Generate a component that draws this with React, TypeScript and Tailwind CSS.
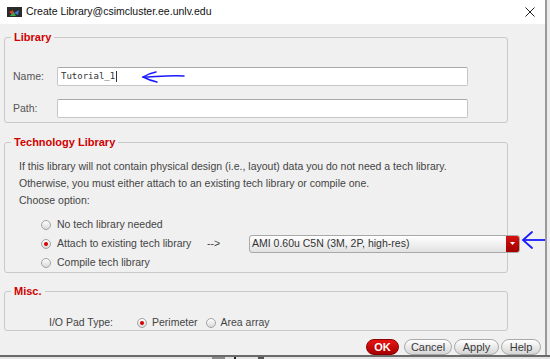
import React from 'react';

function Radio({ checked }: { checked?: boolean }) {
  return (
    <span className="flex h-[10px] w-[10px] shrink-0 items-center justify-center rounded-full border border-[#a3a3a3] bg-gradient-to-b from-[#fdfdfd] to-[#d9d9d9]">
      {checked && <span className="h-[4px] w-[4px] rounded-full bg-[#d40000]" />}
    </span>
  );
}

function Box({ title, className, children }: { title: string; className?: string; children: React.ReactNode }) {
  return (
    <div className={`relative w-[504px] rounded-[3px] border border-[#c9c9c9] ${className ?? ''}`}>
      <span className="absolute -top-[8px] left-[6px] bg-[#f0f0f0] px-[3px] text-[11px] font-bold leading-[14px] text-[#d00000]">
        {title}
      </span>
      {children}
    </div>
  );
}

function Btn({ label, w, primary }: { label: string; w: string; primary?: boolean }) {
  return (
    <button
      className={`flex h-[16px] items-center justify-center rounded-full border text-[11px] leading-none ${w} ${
        primary
          ? 'border-[#8a0000] bg-gradient-to-b from-[#e81414] to-[#a80000] font-bold text-white'
          : 'border-[#a9a9a9] bg-gradient-to-b from-[#ffffff] to-[#d6d6d6] text-[#3a3a3a]'
      }`}
    >
      {label}
    </button>
  );
}

export default function App() {
  return (
    <div className="relative flex h-[359px] w-[550px] flex-col overflow-hidden bg-[#e6e6e6] font-['Liberation_Sans',Arial,sans-serif] text-[10.5px] text-[#444]">
      <div className="flex h-[355px]">
        <div className="flex w-[545px] flex-col">
          {/* title bar */}
          <div className="flex h-[24px] items-center bg-white pl-[7px] pr-[10px]">
            <svg width="15" height="10" viewBox="0 0 15 10">
              <rect x="0" y="0" width="15" height="10" fill="#2b2b2b" />
              <path d="M3 9 L6 4 L9 9 Z" fill="#2bb24c" />
              <path d="M2 5 L6 3 L6 8 Z" fill="#e23b2e" />
              <path d="M7 6 L12 3 L11 8 Z" fill="#3b7be0" />
            </svg>
            <span className="ml-[4px] text-[10.5px] text-[#111]">Create Library@csimcluster.ee.unlv.edu</span>
            <svg className="ml-auto" width="10" height="10" viewBox="0 0 10 10">
              <path d="M0.5 0.5 L9.5 9.5 M9.5 0.5 L0.5 9.5" stroke="#222" strokeWidth="1" />
            </svg>
          </div>

          {/* body */}
          <div className="relative flex flex-1 flex-col bg-[#f0f0f0] px-[4px]">
            <Box title="Library" className="mt-[13px] pb-[4px] pl-[8px] pt-[29px]">
              <div className="flex items-center">
                <span className="w-[44px] shrink-0 text-[#555]">Name:</span>
                <div className="flex h-[19px] w-[411px] shrink-0 items-center rounded-[2px] border border-[#c6c6c6] border-t-[#a9a9a9] bg-white pl-[3px] font-['DejaVu_Sans_Mono',monospace] text-[9px] text-[#333]">
                  Tutorial_1<span className="ml-[1px] h-[11px] w-[1px] bg-[#333]" />
                </div>
              </div>
              <div className="mt-[13px] flex items-center">
                <span className="w-[44px] shrink-0 text-[#555]">Path:</span>
                <div className="h-[19px] w-[411px] shrink-0 rounded-[2px] border border-[#c6c6c6] border-t-[#a9a9a9] bg-white" />
              </div>
            </Box>

            <Box title="Technology Library" className="mt-[19px] pl-[14px] pt-[15px]">
              <div className="leading-[17px]">
                <p>If this library will not contain physical design (i.e., layout) data you do not need a tech library.</p>
                <p>Otherwise, you must either attach to an existing tech library or compile one.</p>
                <p>Choose option:</p>
              </div>
              <div className="ml-[22px] mt-[6px] flex flex-col">
                <div className="flex h-[19px] items-center gap-[6px]">
                  <Radio />
                  <span>No tech library needed</span>
                </div>
                <div className="flex h-[19px] items-center">
                  <div className="flex w-[166px] shrink-0 items-center gap-[6px]">
                    <Radio checked />
                    <span className="whitespace-nowrap">Attach to existing tech library</span>
                  </div>
                  <span className="w-[42px] shrink-0">--&gt;</span>
                  <div className="relative flex h-[18px] w-[271px] shrink-0 items-center overflow-hidden rounded-[3px] border border-[#a8a8a8] bg-gradient-to-b from-[#ffffff] to-[#e2e2e2]">
                    <span className="flex-1 pl-[2px] text-[#333]">AMI 0.60u C5N (3M, 2P, high-res)</span>
                    <span className="flex h-full w-[13px] items-center justify-center bg-gradient-to-b from-[#d81010] to-[#a00000]">
                      <svg width="5" height="3" viewBox="0 0 5 3">
                        <path d="M0 0 L5 0 L2.5 3 Z" fill="#fff" />
                      </svg>
                    </span>
                  </div>
                </div>
                <div className="flex h-[19px] items-center gap-[6px]">
                  <Radio />
                  <span>Compile tech library</span>
                </div>
              </div>
            </Box>

            <Box title="Misc." className="mt-[18px] h-[40px] pl-[44px] pt-[24px]">
              <div className="flex h-[14px] items-center">
                <span className="w-[88px] shrink-0">I/O Pad Type:</span>
                <Radio checked />
                <span className="ml-[5px] mr-[8px]">Perimeter</span>
                <Radio />
                <span className="ml-[5px]">Area array</span>
              </div>
            </Box>

            <div className="ml-[362px] mt-[8px] flex">
              <Btn label="OK" w="w-[37px]" primary />
              <div className="ml-[5px]"><Btn label="Cancel" w="w-[48px]" /></div>
              <div className="ml-[2px]"><Btn label="Apply" w="w-[45px]" /></div>
              <div className="ml-[2px]"><Btn label="Help" w="w-[40px]" /></div>
            </div>

            {/* hand-drawn annotations */}
            <svg className="absolute left-[139px] top-[44px]" width="50" height="16" viewBox="0 0 50 16">
              <path d="M4 9 C14 9 30 7 45 8" stroke="#1a1aff" strokeWidth="1.5" fill="none" strokeLinecap="round" />
              <path d="M17 4 C12 5 7 7 4 9 C8 11 13 13 18 14" stroke="#1a1aff" strokeWidth="1.5" fill="none" strokeLinecap="round" />
            </svg>
            <svg className="absolute left-[517px] top-[205px]" width="28" height="22" viewBox="0 0 28 22">
              <path d="M6 11 L28 11" stroke="#1a1aff" strokeWidth="1.8" fill="none" />
              <path d="M15 3 L6 11 L15 19" stroke="#1a1aff" strokeWidth="1.8" fill="none" strokeLinecap="round" />
            </svg>
          </div>
        </div>
        <div className="w-[5px] border-l-2 border-[#9a9a9a] bg-[#ececec]" />
      </div>
      <div className="relative h-[4px] border-t-2 border-[#6a6a6a] bg-[#e4e4e4]">
        <span className="absolute left-[212px] top-0 h-[2px] w-[13px] bg-[#8a8a8a]" />
        <span className="absolute left-[234px] top-0 h-[2px] w-[2px] bg-[#222]" />
        <span className="absolute left-[258px] top-0 h-[2px] w-[6px] bg-[#555]" />
      </div>
    </div>
  );
}
